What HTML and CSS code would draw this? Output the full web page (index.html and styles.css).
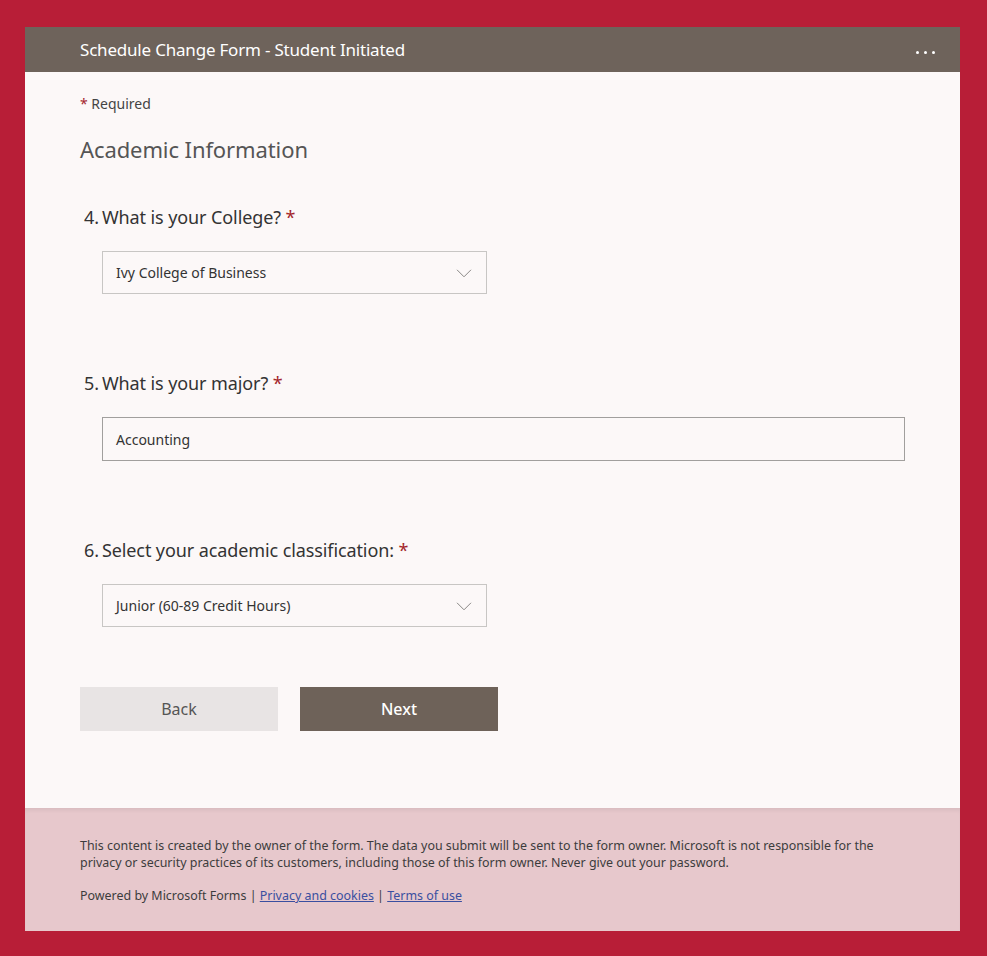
FILE: index.html
```html
<!DOCTYPE html>
<html>
<head>
<meta charset="utf-8">
<link rel="stylesheet" href="styles.css">
</head>
<body>
<div class="page">
  <div class="card">
    <header class="topbar">
      <div class="title">Schedule Change Form - Student Initiated</div>
      <div class="more"><span></span><span></span><span></span></div>
    </header>
    <main class="body">
      <div class="required"><span class="star">*</span> Required</div>
      <h2 class="section">Academic Information</h2>

      <div class="question q4">
        <div class="qtitle"><span class="num">4.</span>What is your College? <span class="star">*</span></div>
        <div class="select">
          <span>Ivy College of Business</span>
          <svg class="chev" width="16" height="9" viewBox="0 0 16 9"><path d="M1 0.8 L8 7.8 L15 0.8" fill="none" stroke="#8a8886" stroke-width="1"/></svg>
        </div>
      </div>

      <div class="question q5">
        <div class="qtitle"><span class="num">5.</span>What is your major? <span class="star">*</span></div>
        <div class="textbox">Accounting</div>
      </div>

      <div class="question q6">
        <div class="qtitle"><span class="num">6.</span>Select your academic classification: <span class="star">*</span></div>
        <div class="select">
          <span>Junior (60-89 Credit Hours)</span>
          <svg class="chev" width="16" height="9" viewBox="0 0 16 9"><path d="M1 0.8 L8 7.8 L15 0.8" fill="none" stroke="#8a8886" stroke-width="1"/></svg>
        </div>
      </div>

      <div class="buttons">
        <button class="btn back">Back</button>
        <button class="btn next">Next</button>
      </div>
    </main>
    <footer class="footer">
      <p class="disclaimer">This content is created by the owner of the form. The data you submit will be sent to the form owner. Microsoft is not responsible for the privacy or security practices of its customers, including those of this form owner. Never give out your password.</p>
      <p class="powered">Powered by Microsoft Forms | <a href="#">Privacy and cookies</a> | <a href="#">Terms of use</a></p>
    </footer>
  </div>
</div>
</body>
</html>
```
FILE: styles.css
```css
html, body {
  margin: 0;
  padding: 0;
}
body {
  background: #b81e37;
  font-family: "Noto Sans", "Open Sans", sans-serif;
  width: 987px;
  height: 956px;
  overflow: hidden;
}
.page {
  padding: 27px 27px 0 25px;
}
.card {
  width: 935px;
  background: #fcf8f8;
}
.topbar {
  height: 45px;
  background: #6e635b;
  display: flex;
  align-items: center;
  justify-content: space-between;
  padding: 0 25px 0 55px;
}
.title {
  color: #fff;
  font-size: 17px;
  letter-spacing: -0.2px;
}
.more {
  display: flex;
  gap: 5px;
  margin-top: 6px;
}
.more span {
  width: 3px;
  height: 3px;
  border-radius: 50%;
  background: #fff;
}
.body {
  padding: 22px 55px 77px 55px;
}
.required {
  font-size: 14px;
  color: #444;
  height: 21px;
}
.star {
  color: #a4262c;
}
.section {
  margin: 19px 0 0 0;
  font-size: 22px;
  font-weight: normal;
  color: #555;
  height: 30px;
  line-height: 30px;
  letter-spacing: -0.1px;
}
.question {
  padding-left: 4px;
}
.q4 { margin-top: 41px; }
.q5 { margin-top: 77px; }
.q6 { margin-top: 77px; }
.qtitle {
  font-size: 18px;
  color: #333;
  height: 24px;
  line-height: 24px;
  letter-spacing: -0.1px;
}
.num {
  margin-right: 3px;
}
.select {
  margin: 22px 0 0 18px;
  width: 356px;
  height: 41px;
  border: 1px solid #c8c6c4;
  display: flex;
  align-items: center;
  justify-content: space-between;
  padding: 0 14px 0 13px;
  font-size: 14px;
  color: #333;
}
.textbox {
  margin: 22px 0 0 18px;
  height: 42px;
  border: 1px solid #a19f9d;
  display: flex;
  align-items: center;
  padding-left: 13px;
  font-size: 14px;
  color: #333;
  width: 788px;
}
.chev {
  margin-top: 1px;
}
.buttons {
  display: flex;
  gap: 22px;
  margin-top: 60px;
}
.btn {
  width: 198px;
  height: 44px;
  border: none;
  font-family: inherit;
  font-size: 16px;
  cursor: pointer;
}
.back {
  background: #e8e4e4;
  color: #555;
}
.next {
  background: #6e6259;
  color: #fff;
  font-weight: 500;
}
.footer {
  background: #e7c8cc;
  box-shadow: inset 0 4px 4px -2px rgba(0,0,0,0.07);
  padding: 29px 55px 27px 55px;
  font-size: 12.45px;
  color: #3c3c3c;
  line-height: 17px;
}
.footer p {
  margin: 0;
}
.disclaimer {
  width: 805px;
}
.powered {
  margin-top: 16px !important;
}
.footer a {
  color: #3a4fa0;
  text-decoration: underline;
}
```
